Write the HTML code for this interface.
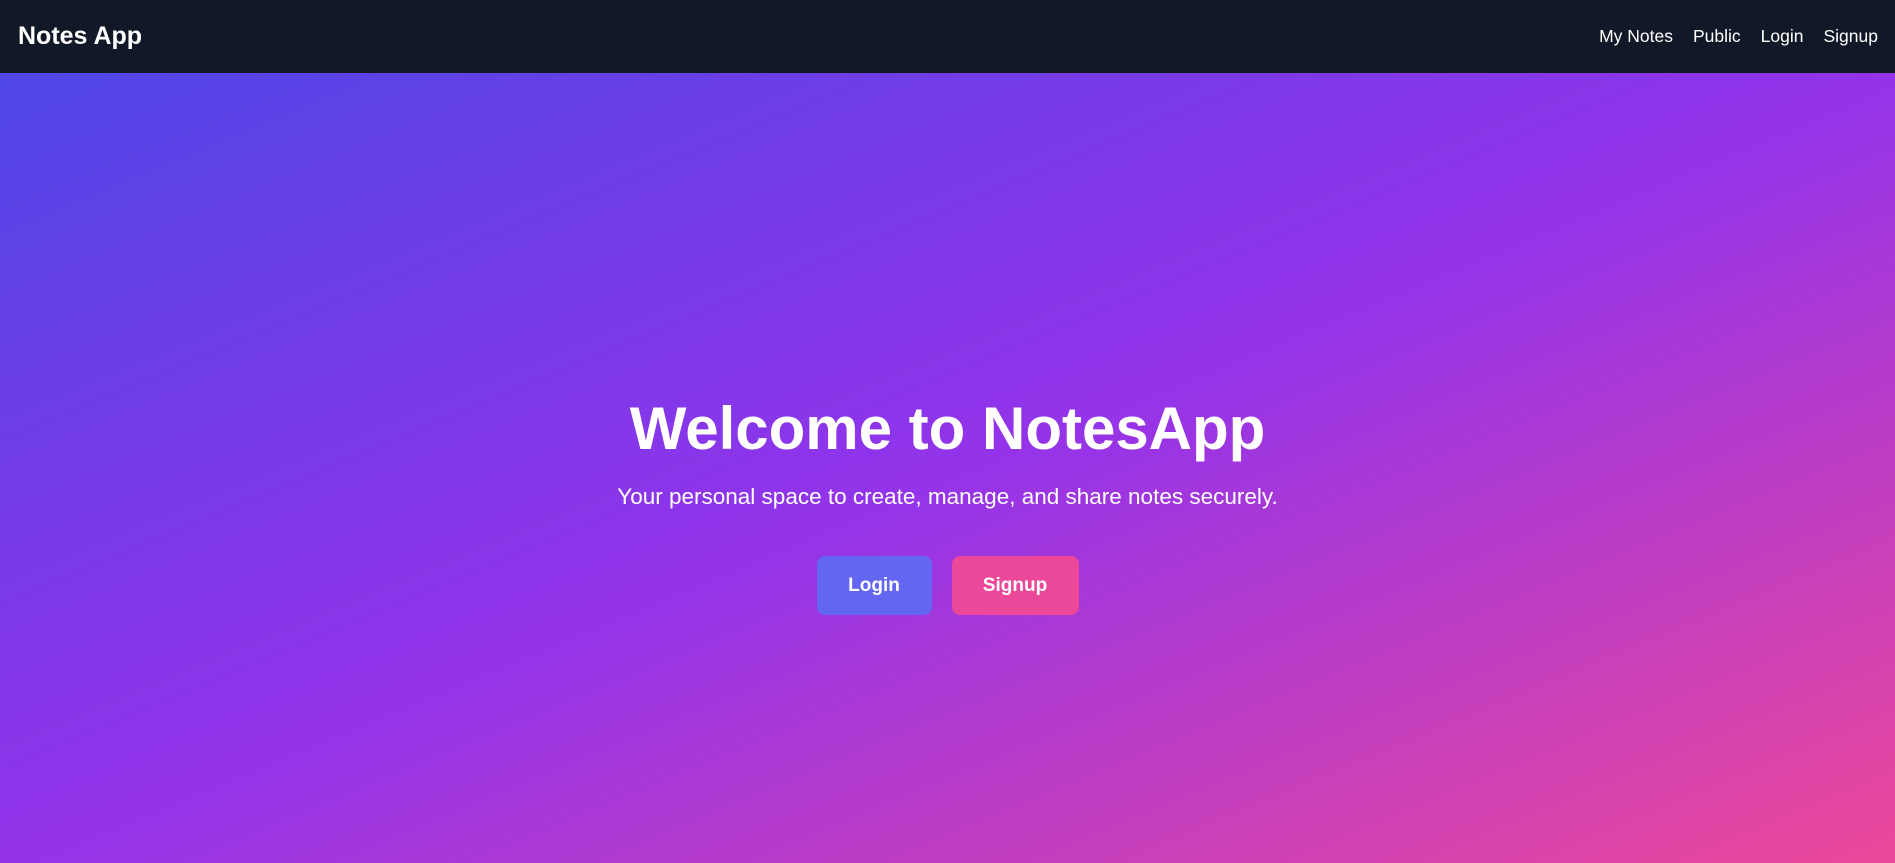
<!DOCTYPE html>
<html><head><meta charset="utf-8"><style>
*{margin:0;padding:0;box-sizing:border-box}
html,body{width:1895px;height:863px;overflow:hidden;font-family:"Liberation Sans",Arial,sans-serif}
nav{height:73px;background:#111827;display:flex;align-items:center;justify-content:space-between;padding:0 17px 0 18px;color:#fff}
nav .brand{font-size:25px;font-weight:bold}
nav .links{display:flex;gap:20px;font-size:17.5px}
main{height:790px;background:linear-gradient(to bottom right,#4f46e5,#9333ea 50%,#ec4899);display:flex;flex-direction:column;align-items:center;color:#fff}
h1{font-size:60px;font-weight:bold;line-height:80px}
p{font-size:22.5px;margin-top:14px;line-height:28px}
.btns{display:flex;gap:20px;margin-top:45px}
.btn{height:59px;border-radius:8px;display:flex;align-items:center;justify-content:center;font-weight:bold;font-size:19px;color:#fff}
</style></head><body>
<nav><div class="brand">Notes App</div><div class="links"><span>My Notes</span><span>Public</span><span>Login</span><span>Signup</span></div></nav>
<main>
<div style="height:316px"></div>
<h1>Welcome to NotesApp</h1>
<p>Your personal space to create, manage, and share notes securely.</p>
<div class="btns"><div class="btn" style="width:115px;background:#6366f1">Login</div><div class="btn" style="width:127px;background:#ec4899">Signup</div></div>
</main>
</body></html>
